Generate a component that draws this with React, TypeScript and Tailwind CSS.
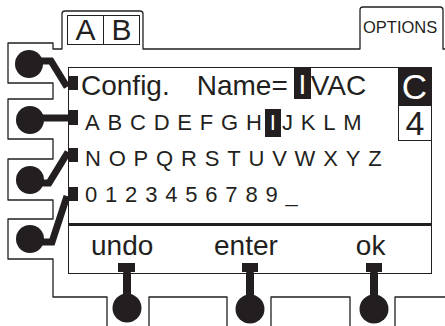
import React from "react";

const INK = "#231f20";

function Letters({ items }: { items: string[] }) {
  return (
    <>
      {items.map((c, i) => (
        <span key={i} className="leading-[36px]">
          {c}
        </span>
      ))}
    </>
  );
}

export default function App() {
  return (
    <div className="relative w-[445px] h-[326px] overflow-hidden bg-white text-[#231f20] font-['Liberation_Sans',Arial,sans-serif]">
      {/* bezel drawing */}
      <svg className="absolute inset-0" width="445" height="326" viewBox="0 0 445 326">
        <g fill="none" stroke={INK} strokeWidth="1.3" strokeLinejoin="round">
          <path d="M107 326 V297 H53 V259 H8 V219 H53 V200 H8 V159 H53 V139 H8 V99 H53 V83 H8 V43 H53 V49 H62 V14 Q62 11 65 11 H140 Q143 11 143 14 V49 H360 V10 Q360 7 363 7 H440 Q443 7 443 10 V49 H445" />
          <path d="M149 326 V297 H227 V326" />
          <path d="M271 326 V297 H350 V326" />
          <path d="M395 326 V297 H445" />
        </g>
        <g fill={INK} stroke="none">
          {/* left knobs */}
          <circle cx="29" cy="64" r="14" />
          <circle cx="30" cy="120" r="14" />
          <circle cx="30" cy="180" r="14" />
          <circle cx="30" cy="239" r="14" />
          {/* row pads */}
          <rect x="68" y="76" width="10" height="14" />
          <rect x="68" y="110" width="10" height="15" />
          <rect x="68" y="148" width="10" height="14" />
          <rect x="68" y="187" width="10" height="14" />
          {/* bottom pads */}
          <rect x="118" y="263" width="17" height="9" />
          <rect x="242" y="263" width="16" height="9" />
          <rect x="366" y="263" width="16" height="9" />
          {/* bottom knobs */}
          <circle cx="127" cy="308" r="14.5" />
          <circle cx="250" cy="309" r="14.5" />
          <circle cx="374" cy="309" r="14.5" />
        </g>
        <g fill="none" stroke={INK} strokeWidth="7" strokeLinejoin="miter">
          <polyline points="30,61 51,61 67,87" />
          <polyline points="30,118 70,118" />
          <polyline points="30,183 49,183 68,152" />
          <polyline points="30,242 52,242 67,196" />
        </g>
        <g fill="none" stroke={INK} strokeWidth="8" strokeLinecap="round">
          <line x1="127" y1="274" x2="127" y2="300" />
          <line x1="250" y1="274" x2="250" y2="300" />
          <line x1="374" y1="274" x2="374" y2="300" />
        </g>
      </svg>

      {/* A | B tab */}
      <div className="absolute left-[67px] top-[15px] w-[73px] h-[30px] border border-[#231f20] flex text-[30px]">
        <div className="flex-1 flex items-center justify-center border-r border-[#231f20] leading-[28px]">A</div>
        <div className="flex-1 flex items-center justify-center leading-[28px]">B</div>
      </div>

      {/* OPTIONS tab label */}
      <div className="absolute left-[363px] top-[17px] text-[16.5px] leading-[20px]">OPTIONS</div>

      {/* screen */}
      <div className="absolute left-[68px] top-[67px] w-[364px] h-[207px] border border-[#231f20] flex flex-col">
        <div className="h-[155px] flex">
          <div className="flex-1 flex flex-col pl-[12px]">
            <div className="h-[37px] flex items-start text-[28px]">
              <span className="leading-[35px]">Config.</span>
              <span className="leading-[35px] ml-[27px]">Name=</span>
              <span className="ml-[6px] w-[17px] h-[31px] bg-[#231f20] text-white flex justify-center pt-[2px] leading-[29px]">I</span>
              <span className="leading-[35px]">VAC</span>
            </div>
            <div className="h-[36px] flex items-center gap-[7.8px] pl-[4px] text-[22px]">
              <Letters items={["A", "B", "C", "D", "E", "F", "G", "H"]} />
              <span className="ml-[-4.8px] mr-[-6.8px] w-[16px] h-[28px] bg-[#231f20] text-white flex justify-center leading-[28px]">I</span>
              <Letters items={["J", "K", "L", "M"]} />
            </div>
            <div className="h-[36px] flex items-center gap-[7.8px] pl-[4px] text-[22px]">
              <Letters items={["N", "O", "P", "Q", "R", "S", "T", "U", "V", "W", "X", "Y", "Z"]} />
            </div>
            <div className="h-[36px] flex items-center gap-[7.8px] pl-[4px] text-[22px]">
              <Letters items={["0", "1", "2", "3", "4", "5", "6", "7", "8", "9", "_"]} />
            </div>
          </div>
          <div className="w-[33px] flex flex-col">
            <div className="h-[38px] bg-[#231f20] text-white flex justify-center text-[35px] leading-[38px]">C</div>
            <div className="h-[35px] border-l border-b border-[#231f20] flex justify-center text-[34px] leading-[34px]">4</div>
          </div>
        </div>
        <div className="h-[3px] bg-[#231f20]" />
        <div className="flex-1 flex items-start text-[28px] leading-[40px] pl-[22px]">
          <span>undo</span>
          <span className="ml-[60.7px]">enter</span>
          <span className="ml-[78px]">ok</span>
        </div>
      </div>
    </div>
  );
}
